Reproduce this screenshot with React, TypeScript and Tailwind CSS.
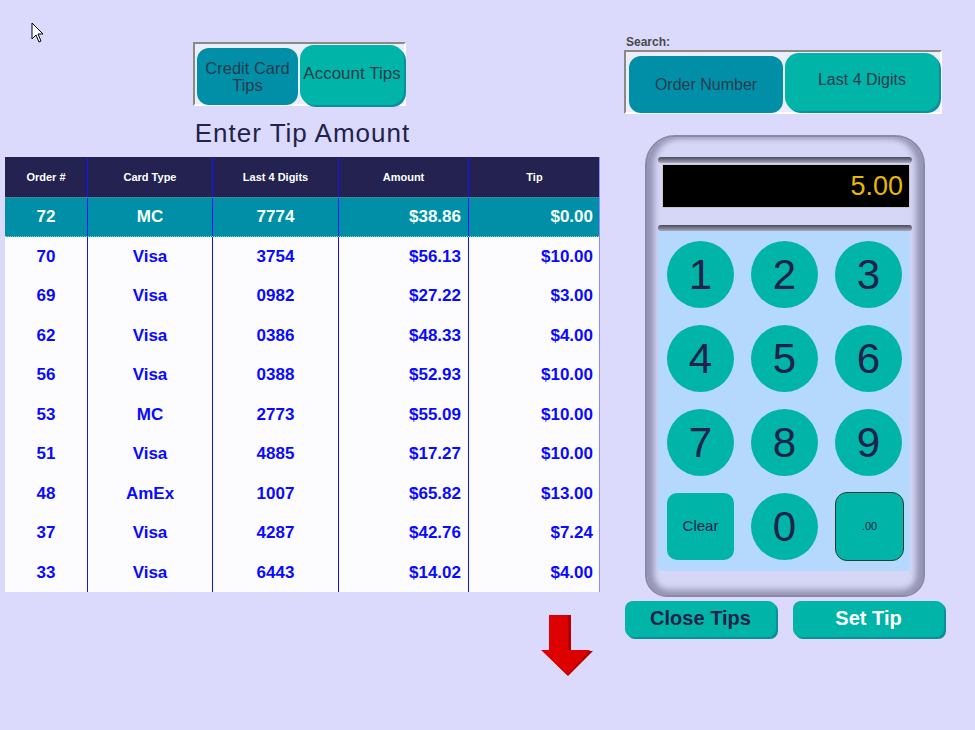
import React from 'react';

const rows = [
    {order: '72', card: 'MC', last4: '7774', amount: '$38.86', tip: '$0.00'},
    {order: '70', card: 'Visa', last4: '3754', amount: '$56.13', tip: '$10.00'},
    {order: '69', card: 'Visa', last4: '0982', amount: '$27.22', tip: '$3.00'},
    {order: '62', card: 'Visa', last4: '0386', amount: '$48.33', tip: '$4.00'},
    {order: '56', card: 'Visa', last4: '0388', amount: '$52.93', tip: '$10.00'},
    {order: '53', card: 'MC', last4: '2773', amount: '$55.09', tip: '$10.00'},
    {order: '51', card: 'Visa', last4: '4885', amount: '$17.27', tip: '$10.00'},
    {order: '48', card: 'AmEx', last4: '1007', amount: '$65.82', tip: '$13.00'},
    {order: '37', card: 'Visa', last4: '4287', amount: '$42.76', tip: '$7.24'},
    {order: '33', card: 'Visa', last4: '6443', amount: '$14.02', tip: '$4.00'},
];

const gridCols = 'grid grid-cols-[82px_125px_126px_130px_132px]';

function Cursor() {
    return (
        <svg className="absolute left-[31px] top-[22px]" width="14" height="22" viewBox="0 0 14 22">
            <path d="M1 1 L1 17 L5 13 L8 20 L10 19 L7 12 L12 12 Z" fill="#fff" stroke="#000" strokeWidth="1"/>
        </svg>
    );
}

function DownArrow() {
    return (
        <svg width="54" height="62" viewBox="0 0 54 62">
            <polygon points="10,0 30,0 30,36 52,36 27,61 2,36 10,36" fill="#b00000"/>
            <polygon points="8,0 27,0 27,35 49,35 26,60 0,35 8,35" fill="#dd0000"/>
        </svg>
    );
}

function Key({label}: {label: string}) {
    return (
        <div className="flex h-[67px] w-[67px] items-center justify-center rounded-full bg-[#00b4a7] text-[42px] leading-none text-[#22224a]">
            {label}
        </div>
    );
}

export default function App() {
    return (
        <div className="relative flex h-[730px] w-[975px] overflow-hidden bg-[#dbdafd] font-['Liberation_Sans',Arial,sans-serif]">
            <Cursor/>

            {/* left column */}
            <div className="ml-[5px] flex w-[595px] flex-col pt-[42px]">
                <div className="ml-[188px] flex h-[64px] w-[213px] items-start gap-[2px] border-2 border-b-white border-l-[#8a8a80] border-r-white border-t-[#8a8a80] bg-[#ececff] pl-[2px] pt-[1px]">
                    <button className="mt-[3px] flex h-[57px] w-[101px] flex-col items-center justify-center rounded-[12px] bg-[#008fa7] text-[16.5px] leading-[17px] text-[#2a3b4f]">
                        <span>Credit Card</span>
                        <span>Tips</span>
                    </button>
                    <button className="flex h-[60px] w-[104px] items-center justify-center rounded-[14px] bg-[#00b4a7] pb-[2px] text-[17px] text-[#2a3b4f] shadow-[2px_2px_0_#0a8fa0]">
                        Account Tips
                    </button>
                </div>
                <div className="mt-[12px] text-center text-[26px] leading-[30px] tracking-[1px] text-[#22224a]">Enter Tip Amount</div>

                <div className="mt-[9px] w-[595px] border-r border-r-[#8c8cff]">
                    <div className={`${gridCols} h-[40px] bg-[#232250] text-[11px] font-bold text-white`}>
                        <div className="flex items-center justify-center">Order #</div>
                        <div className="flex items-center justify-center border-l border-l-[#1414ff]">Card Type</div>
                        <div className="flex items-center justify-center border-l border-l-[#1414ff]">Last 4 Digits</div>
                        <div className="flex items-center justify-center border-l border-l-[#1414ff]">Amount</div>
                        <div className="flex items-center justify-center border-l border-l-[#1414ff]">Tip</div>
                    </div>
                    {rows.map((r, i) => {
                        const sel = i === 0;
                        return (
                            <div
                                key={r.order}
                                className={`${gridCols} h-[39.5px] text-[17px] font-bold ${sel ? 'border-b border-t border-b-[#7fd8a8] border-t-[#808080] border-dotted bg-[#008fa7] text-[#f4fff8]' : 'bg-[#fcfcff] text-[#0a0aff]'}`}
                            >
                                <div className="flex items-center justify-center">{r.order}</div>
                                <div className="flex items-center justify-center border-l border-l-[#1414ff]">{r.card}</div>
                                <div className="flex items-center justify-center border-l border-l-[#1414ff]">{r.last4}</div>
                                <div className="flex items-center justify-end border-l border-l-[#1414ff] pr-[7px]">{r.amount}</div>
                                <div className="flex items-center justify-end border-l border-l-[#1414ff] pr-[7px]">{r.tip}</div>
                            </div>
                        );
                    })}
                </div>

                <div className="ml-[536px] mt-[23px]">
                    <DownArrow/>
                </div>
            </div>

            {/* right column */}
            <div className="ml-[24px] flex w-[322px] flex-col pt-[35px]">
                <div className="pl-[2px] text-[12px] font-bold leading-[14px] text-[#484848]">Search:</div>
                <div className="mt-[1px] flex h-[64px] w-[318px] items-start gap-[2px] border-2 border-b-white border-l-[#8a8a80] border-r-white border-t-[#8a8a80] bg-[#ececff] pl-[3px] pt-[1px]">
                    <button className="mt-[3px] flex h-[57px] w-[154px] items-center justify-center rounded-[12px] bg-[#008fa7] text-[16px] text-[#2a3b4f]">
                        Order Number
                    </button>
                    <button className="flex h-[58px] w-[154px] items-center justify-center rounded-[14px] bg-[#00b4a7] pb-[5px] text-[16px] text-[#2a3b4f] shadow-[2px_2px_0_#0a8fa0]">
                        Last 4 Digits
                    </button>
                </div>

                {/* calculator */}
                <div className="ml-[21px] mt-[21px] flex h-[462px] w-[280px] flex-col rounded-b-[22px] rounded-t-[30px] border-2 border-[#8a8aa2] bg-[#d6d6f6] px-[11px] pt-[20px] shadow-[inset_7px_0_6px_#9494b8,inset_-7px_0_6px_#9494b8,inset_0_-6px_6px_#a4a4c4]">
                    <div className="h-[6px] rounded-sm bg-gradient-to-b from-[#4a4a5a] to-[#a8a8c0]"/>
                    <div className="ml-[4px] mt-[1px] flex h-[44px] w-[248px] items-center justify-end border border-[#c8c8c8] bg-black pr-[6px] text-[27px] text-[#e6b800]">
                        5.00
                    </div>
                    <div className="mt-[17px] h-[6px] rounded-sm bg-gradient-to-b from-[#4a4a5a] to-[#a8a8c0]"/>
                    <div className="grid h-[340px] w-[252px] grid-cols-[67px_67px_67px] content-start gap-[17px] bg-[#b5d8fd] pl-[9px] pt-[10px]">
                        {['1', '2', '3', '4', '5', '6', '7', '8', '9'].map((d) => (
                            <Key key={d} label={d}/>
                        ))}
                        <div className="flex h-[67px] w-[67px] items-center justify-center rounded-[10px] bg-[#00b4a7] text-[15px] text-[#22224a]">
                            Clear
                        </div>
                        <Key label="0"/>
                        <div className="flex h-[69px] w-[69px] -translate-y-[1px] items-center justify-center rounded-[12px] border-[1.5px] border-[#2c3a30] bg-[#00b4a7] text-[11px] text-[#22224a]">
                            .00
                        </div>
                    </div>
                </div>

                <div className="mt-[4px] flex gap-[17px] pl-[1px]">
                    <button className="flex h-[36px] w-[151px] items-center justify-center rounded-[8px] bg-[#00b4a7] pb-[2px] text-[20px] font-bold text-[#22224a] shadow-[2px_2px_0_#0a8fa0]">
                        Close Tips
                    </button>
                    <button className="flex h-[36px] w-[151px] items-center justify-center rounded-[8px] bg-[#00b4a7] pb-[2px] text-[20px] font-bold text-white shadow-[2px_2px_0_#0a8fa0]">
                        Set Tip
                    </button>
                </div>
            </div>
        </div>
    );
}
